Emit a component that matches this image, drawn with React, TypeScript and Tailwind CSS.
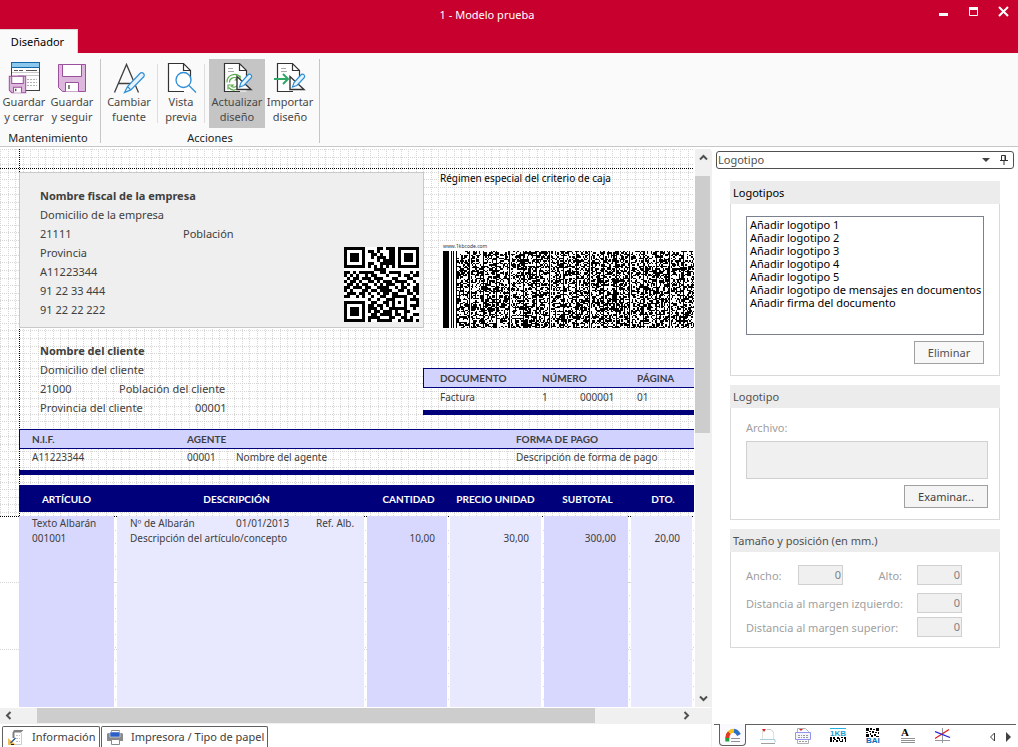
import type { ReactNode } from "react";

/* ---------- ribbon icons ---------- */

function Floppy({ x, y, s }: { x: number; y: number; s: number }) {
  const u = s / 28;
  return (
    <g transform={`translate(${x} ${y}) scale(${u})`} stroke="#9c4f9c" strokeWidth={1 / u} fill="none">
      <path d="M.5 .5H27.5V27.5H4.5L.5 23.5Z" fill="#dcb8dc" />
      <path d="M4.5 .5H23.5V12.5H4.5Z" fill="#fff" />
      <path d="M7.500 27.500V18.500H20.500V27.500" fill="#fff" />
      <path d="M11 21V25" stroke="#555" strokeWidth={1.4 / u} />
    </g>
  );
}

function SaveCloseIcon() {
  return (
    <svg width="32" height="32" viewBox="0 0 32 32" aria-hidden="true">
      <rect x="3.500" y="5.500" width="28" height="23" fill="#fff" stroke="#404040" />
      <rect x="3.500" y=".5" width="28" height="5" fill="#8cc8ee" stroke="#1766a6" />
      <path d="M6 8.500h4M11 8.500h4M18 8.500h11" stroke="#555" />
      <path d="M4 10.500h27M10 13.500h21" stroke="#c8c8c8" />
      <path d="M19 17.500h10M19 20.500h10M19 23.500h10" stroke="#b0b0b0" strokeDasharray="2 1" />
      <Floppy x={1} y={14} s={17} />
    </svg>
  );
}

function SaveIcon() {
  return (
    <svg width="32" height="32" viewBox="0 0 32 32" aria-hidden="true">
      <Floppy x={2} y={2} s={28} />
    </svg>
  );
}

function Pen() {
  return (
    <path
      d="M30 12.800c-1-1-2.300-.8-3.200.2l-6.800 7.600-1.500 4.400 4.400-1.500 7-7.500c1-1 1-2.300.1-3.200z"
      fill="#e6f3fc"
      stroke="#2f8fd6"
      strokeWidth="1.200"
    />
  );
}

function FontIcon() {
  return (
    <svg width="32" height="32" viewBox="0 0 32 32" aria-hidden="true">
      <path d="M1.500 30.500 13.500 2.500 25.500 30.500M5.500 21.500h16" fill="none" stroke="#404040" strokeWidth="1.300" />
      <path
        d="M30.500 11.500c-1-1.100-2.600-1-3.600 0L14.500 24.500l-3 6 6.300-2.600L30.500 15c1-1 1-2.500 0-3.500zM14.500 24.500l3.300 3.400"
        fill="#e6f3fc"
        stroke="#2f8fd6"
        strokeWidth="1.200"
      />
    </svg>
  );
}

function PageShape() {
  return (
    <>
      <path d="M3.500 1.500H18.500L25.500 8.500V29.500H3.500Z" fill="#fff" />
      <path d="M25.500 19V8.500L18.500 1.500H3.500V29.500H19M18.500 1.500V8.500H25.500" fill="none" stroke="#333" strokeWidth="1.200" />
    </>
  );
}

function PreviewIcon() {
  return (
    <svg width="32" height="32" viewBox="0 0 32 32" aria-hidden="true">
      <PageShape />
      <circle cx="18.500" cy="18" r="7.500" fill="#fff" stroke="#2f8fd6" strokeWidth="1.300" />
      <path d="M24 23.500 31 30.500" stroke="#2f8fd6" strokeWidth="1.300" />
    </svg>
  );
}

function SetSquare() {
  return <path d="M16 14.500V27.500H30Z" fill="#fff" stroke="#333" strokeWidth="1.400" />;
}

function RefreshDesignIcon() {
  return (
    <svg width="32" height="32" viewBox="0 0 32 32" aria-hidden="true">
      <PageShape />
      <path d="M7 6.500h5M7 9.500h6" stroke="#aaa" />
      <g fill="none" stroke="#58ad48" strokeWidth="1.200">
        <path d="M6 20.500a7.500 7.500 0 0 1 13.500-5M20.500 20a7.500 7.500 0 0 1-13 5.500" />
        <path d="M8.500 20.500a4.700 4.700 0 0 1 7.500-4l-1.500 1.500h4.500v-4.500M17.500 20.500a4.700 4.700 0 0 1-7 4l1.500-1.500H7v4.500" />
      </g>
      <SetSquare />
      <Pen />
    </svg>
  );
}

function ImportDesignIcon() {
  return (
    <svg width="32" height="32" viewBox="0 0 32 32" aria-hidden="true">
      <PageShape />
      <path d="M7 6.500h5M7 9.500h6" stroke="#aaa" />
      <SetSquare />
      <path d="M0 17H13M9 12 14 17 9 22" fill="none" stroke="#2fa866" strokeWidth="2" />
      <Pen />
    </svg>
  );
}

/* ---------- drawings on the canvas ---------- */

const STEP = 7.56;
const COLUMN_GAPS = [115, 365, 448, 543, 629, 693];

function DotGrid() {
  const lines = Array.from({ length: 260 }, (_, i) => Math.round(i * STEP));
  const rows = Array.from({ length: 49 }, (_, i) => Math.round(i * STEP));
  return (
    <svg className="absolute inset-0 h-full w-full" aria-hidden="true" shapeRendering="crispEdges">
      <g stroke="#d6d6d6" strokeDasharray="1 1">
        {lines.map((p) => (
          <line key={`v${p}`} x1={p + 0.5} x2={p + 0.5} y1="0" y2="368" />
        ))}
        {rows.map((p) => (
          <line key={`h${p}`} y1={p + 0.5} y2={p + 0.5} x1="0" x2="100%" />
        ))}
        <line x1="0" x2="100%" y1="433.500" y2="433.500" />
        <line x1="0" x2="100%" y1="500.500" y2="500.500" />
      </g>
      <g stroke="#d6d6d6" strokeDasharray="1 12">
        {COLUMN_GAPS.map((p) => (
          <line key={p} x1={p + 0.5} x2={p + 0.5} y1="381" y2="100%" />
        ))}
      </g>
      <g stroke="#000" strokeDasharray="1 1">
        <line x1="0" x2="100%" y1="19.500" y2="19.500" />
        <line x1="19.500" x2="19.500" y1="0" y2="368" />
        <line x1="0" x2="100%" y1="367.500" y2="367.500" />
      </g>
    </svg>
  );
}

const QR = [
  "1111111000011011101111111",
  "1000001011010001101000001",
  "1011101001101001101011101",
  "1011101001011101101011101",
  "1011101000010111101011101",
  "1000001011001111101000001",
  "1111111010101010101111111",
  "0000000000111100000000000",
  "1101011111001101111000101",
  "1010100101100010001011011",
  "0101101110111000110001100",
  "1011010011010111011110010",
  "0110101100101011100101001",
  "1101110110011110010110011",
  "1010001101101111001101011",
  "0111011010010110110001101",
  "1100101001001100111110010",
  "0000000010010011100010111",
  "1111111001100110101010001",
  "1000001011011010100010111",
  "1011101011101001111110010",
  "1011101010110111010011000",
  "1011101001101111011010011",
  "1000001011110001100110100",
  "1111111010011111001011101",
];

function QrCode() {
  const d = QR.map((row, y) =>
    row
      .split("")
      .map((c, x) => (c === "1" ? `M${x} ${y}h1v1h-1z` : ""))
      .join("")
  ).join("");
  return (
    <svg width="75" height="75" viewBox="0 0 25 25" shapeRendering="crispEdges" role="img" aria-label="QR">
      <rect width="25" height="25" fill="#fff" />
      <path d={d} />
    </svg>
  );
}

/* Cells are snapped to whole pixels so that columns are one or two pixels wide. */
function DenseBarcode() {
  const u = 4 / 3;
  let seed = 77;
  const next = () => {
    seed = (seed * 1103515245 + 12345) % 2147483648;
    return seed / 2147483648;
  };
  let d = "M0 0h6v77h-6zM8 0h1v77h-1zM10 0h1v77h-1z";
  for (let c = 0; c < 290; c++) {
    const x = Math.round(13 + c * u);
    const w = Math.round(13 + (c + 1) * u) - x;
    if (c % 10 === 0) {
      d += `M${x} 0h1v77h-1z`;
      continue;
    }
    for (let r = 0; r < 58; r++) {
      const y = Math.round(r * u);
      const h = Math.min(77, Math.round((r + 1) * u)) - y;
      if (next() < 0.5) d += `M${x} ${y}h${w}v${h}h-${w}z`;
    }
  }
  return (
    <svg width="400" height="77" className="block shrink-0 bg-white" shapeRendering="crispEdges" role="img" aria-label="1KB">
      <path d={d} />
    </svg>
  );
}

/* ---------- small pieces ---------- */

function Chevron({ d }: { d: string }) {
  return (
    <svg width="9" height="9" viewBox="0 0 9 9" aria-hidden="true">
      <path d={d} fill="none" stroke="#505050" strokeWidth="2" />
    </svg>
  );
}

function RibbonButton({ icon, top, bottom, active = false, width }: { icon: ReactNode; top: string; bottom: string; active?: boolean; width: string }) {
  return (
    <button
      type="button"
      className={`flex h-[69px] flex-col items-center whitespace-nowrap pt-[3px] text-[11px] leading-[15px] text-[#484848] ${width} ${active ? "bg-[#c5c5c5]" : ""}`}
    >
      {icon}
      <span>{top}</span>
      <span>{bottom}</span>
    </button>
  );
}

function Ribbon() {
  return (
    <div className="flex h-[94px] shrink-0 border-b border-[#c6c6c6] bg-[#fafafa] pb-[3px] pt-[6px]">
      <section className="flex w-[101px] flex-col border-r border-[#c6c6c6]">
        <div className="flex">
          <RibbonButton width="w-12" icon={<SaveCloseIcon />} top="Guardar" bottom="y cerrar" />
          <RibbonButton width="w-12" icon={<SaveIcon />} top="Guardar" bottom="y seguir" />
        </div>
        <h2 className="w-24 text-center text-[11px] leading-[19px] text-[#222]">Mantenimiento</h2>
      </section>
      <section className="flex w-[219px] flex-col border-r border-[#c6c6c6]">
        <div className="flex">
          <RibbonButton width="w-14" icon={<FontIcon />} top="Cambiar" bottom="fuente" />
          <div className="my-[5px] w-px bg-[#dedede]" />
          <RibbonButton width="w-[46px]" icon={<PreviewIcon />} top="Vista" bottom="previa" />
          <div className="my-[5px] mr-1 w-px bg-[#dedede]" />
          <RibbonButton width="w-14" icon={<RefreshDesignIcon />} top="Actualizar" bottom="diseño" active />
          <RibbonButton width="w-[50px]" icon={<ImportDesignIcon />} top="Importar" bottom="diseño" />
        </div>
        <h2 className="text-center text-[11px] leading-[19px] text-[#222]">Acciones</h2>
      </section>
    </div>
  );
}

function TitleBar() {
  return (
    <header className="flex h-[53px] shrink-0 flex-col bg-[#c8002d] text-white">
      <div className="grid h-[29px] grid-cols-[1fr_auto_1fr] items-center">
        <span />
        <h1 className="pr-11 pt-[2px] text-[11px]">1 - Modelo prueba</h1>
        <div className="flex h-full justify-end gap-[18px] pr-2 pt-[6px]">
          <button type="button" aria-label="Minimizar" className="h-3 w-3">
            <svg width="12" height="12" viewBox="0 0 12 12"><path d="M1 8.500h9" stroke="#fff" strokeWidth="3" /></svg>
          </button>
          <button type="button" aria-label="Maximizar" className="h-3 w-3">
            <svg width="12" height="12" viewBox="0 0 12 12"><path d="M1.500 1v8.500h8V1" stroke="#fff" fill="none" /><path d="M1 2.500h9" stroke="#fff" strokeWidth="3" /></svg>
          </button>
          <button type="button" aria-label="Cerrar" className="h-3 w-3">
            <svg width="12" height="12" viewBox="0 0 12 12"><path d="M1 1l9 9M10 1L1 10" stroke="#fff" strokeWidth="2" /></svg>
          </button>
        </div>
      </div>
      <nav className="flex h-6">
        <button type="button" className="w-[78px] border-r border-t border-[#d8d8d8] bg-[#fafafa] pr-[2px] pt-px text-[11px] text-black">Diseñador</button>
      </nav>
    </header>
  );
}

/* ---------- document canvas ---------- */

function CompanyBox() {
  return (
    <div className="flex h-[156px] w-[405px] shrink-0 items-end justify-between border border-[#c9c9c9] bg-[#efefef] pb-[5px] pl-5 pr-1 text-[11px] leading-[19px] text-[#404040]">
      <div className="self-start pt-[13px]">
        <p className="font-bold">Nombre fiscal de la empresa</p>
        <p>Domicilio de la empresa</p>
        <p className="flex"><span className="w-[143px]">21111</span><span>Población</span></p>
        <p>Provincia</p>
        <p>A11223344</p>
        <p>91 22 33 444</p>
        <p>91 22 22 222</p>
      </div>
      <QrCode />
    </div>
  );
}

function ClientBlock() {
  return (
    <div className="w-[383px] shrink-0 pt-[13px] text-[11px] leading-[19px] text-[#404040]">
      <p className="font-bold">Nombre del cliente</p>
      <p>Domicilio del cliente</p>
      <p className="flex"><span className="w-[79px]">21000</span><span>Población del cliente</span></p>
      <p className="flex"><span className="w-[155px]">Provincia del cliente</span><span>00001</span></p>
    </div>
  );
}

const bandHead = "h-5 bg-[#d2d2ff] font-['Lato',sans-serif]";

function DocumentTable() {
  return (
    <div className="mt-10 w-[400px] shrink-0 self-start border-b-[5px] border-[#00007b]">
      <table className="w-full table-fixed border-separate border-spacing-0 text-left text-[10px] text-[#404040]">
        <colgroup>
          <col className="w-[119px]" />
          <col className="w-[95px]" />
          <col />
        </colgroup>
        <thead>
          <tr className={bandHead}>
            <th className="border-y border-l border-[#00007b] p-0 pl-4">DOCUMENTO</th>
            <th className="border-y border-[#00007b] p-0">NÚMERO</th>
            <th className="border-y border-[#00007b] p-0">PÁGINA</th>
          </tr>
        </thead>
        <tbody>
          <tr className="h-[22px]">
            <td className="p-0 pb-1 pl-[17px]">Factura</td>
            <td className="p-0 pb-1"><span className="inline-block w-[38px]">1</span>000001</td>
            <td className="p-0 pb-1">01</td>
          </tr>
        </tbody>
      </table>
    </div>
  );
}

function AgentTable() {
  return (
    <div className="ml-[19px] border-b-[5px] border-[#00007b]">
      <table className="w-full table-fixed border-separate border-spacing-0 text-left text-[10px] text-[#404040]">
        <colgroup>
          <col className="w-[168px]" />
          <col className="w-[329px]" />
          <col />
        </colgroup>
        <thead>
          <tr className={bandHead}>
            <th className="border-y border-l border-[#00007b] p-0 pl-3">N.I.F.</th>
            <th className="border-y border-[#00007b] p-0">AGENTE</th>
            <th className="border-y border-[#00007b] p-0">FORMA DE PAGO</th>
          </tr>
        </thead>
        <tbody>
          <tr className="h-[21px]">
            <td className="p-0 pb-1 pl-[13px]">A11223344</td>
            <td className="p-0 pb-1"><span className="inline-block w-[49px]">00001</span>Nombre del agente</td>
            <td className="p-0 pb-1">Descripción de forma de pago</td>
          </tr>
        </tbody>
      </table>
    </div>
  );
}

const dark = "border-r-[3px] border-transparent bg-[#d8d8ff] bg-clip-padding p-0";
const light = "border-r-[3px] border-transparent bg-[#e8e8ff] bg-clip-padding p-0";

function LinesTable() {
  return (
    <table className="ml-[19px] mt-[10px] w-[760px] table-fixed border-separate border-spacing-0 text-[10px] leading-[15px] text-[#404040]">
      <colgroup>
        <col className="w-[98px]" />
        <col className="w-[250px]" />
        <col className="w-[83px]" />
        <col className="w-[94px]" />
        <col className="w-[87px]" />
        <col className="w-16" />
        <col />
      </colgroup>
      <thead>
        <tr className="h-[27px] bg-[#00007b] font-['Lato',sans-serif] text-white">
          <th className="p-0 pr-[3px] pt-px">ARTÍCULO</th>
          <th className="p-0 pr-[11px] pt-px">DESCRIPCIÓN</th>
          <th className="p-0 pt-px">CANTIDAD</th>
          <th className="p-0 pr-[3px] pt-px">PRECIO UNIDAD</th>
          <th className="p-0 pt-px">SUBTOTAL</th>
          <th className="p-0 pt-px">DTO.</th>
          <td className="p-0" />
        </tr>
        <tr className="h-1"><td colSpan={7} className="p-0" /></tr>
      </thead>
      <tbody className="align-top">
        <tr className="h-[15px]">
          <td className={`${dark} pl-[13px]`}>Texto Albarán</td>
          <td className={`${light} pl-[13px]`}>
            <div className="grid grid-cols-[106px_80px_auto]"><span>Nº de Albarán</span><span>01/01/2013</span><span>Ref. Alb.</span></div>
          </td>
          <td className={dark} /><td className={light} /><td className={dark} /><td className={light} /><td className={dark} />
        </tr>
        <tr className="h-[400px]">
          <td className={`${dark} pl-[13px]`}>001001</td>
          <td className={`${light} pl-[13px]`}>Descripción del artículo/concepto</td>
          <td className={`${dark} pr-3 text-right`}>10,00</td>
          <td className={`${light} pr-3 text-right`}>30,00</td>
          <td className={`${dark} pr-3 text-right`}>300,00</td>
          <td className={`${light} pr-3 text-right`}>20,00</td>
          <td className={dark} />
        </tr>
      </tbody>
    </table>
  );
}

function Canvas() {
  return (
    <div className="relative min-h-0 flex-1 overflow-hidden bg-white">
      <DotGrid />
      <div className="relative pt-[23px]">
        <div className="flex pl-[19px]">
          <CompanyBox />
          <div className="flex shrink-0 flex-col justify-between pl-4">
            <p className="text-[10px] leading-[13px] text-black">Régimen especial del criterio de caja</p>
            <div className="bg-white pl-[3px]">
              <p className="text-[5px] leading-[10px] text-[#333]">www.1kbcode.com</p>
              <DenseBarcode />
            </div>
          </div>
        </div>
        <div className="flex h-[101px] pl-10">
          <ClientBlock />
          <DocumentTable />
        </div>
        <AgentTable />
        <LinesTable />
      </div>
    </div>
  );
}

function CanvasArea() {
  return (
    <div className="flex min-h-0 flex-1 flex-col pt-[2px]">
      <div className="flex min-h-0 flex-1">
        <div className="flex min-w-0 flex-1 flex-col"><Canvas /></div>
        <div className="ml-px flex w-4 flex-col items-center bg-[#f0f0f0]">
          <button type="button" aria-label="Subir" className="flex h-[17px] w-full items-center justify-center"><Chevron d="M1 6.500 4.500 3 8 6.500" /></button>
          <div className="min-h-0 w-full flex-1 pr-px pt-[10px]"><div className="h-1/2 bg-[#cdcdcd]" /></div>
          <button type="button" aria-label="Bajar" className="flex h-[17px] w-full items-center justify-center"><Chevron d="M1 2.500 4.500 6 8 2.500" /></button>
        </div>
      </div>
      <div className="mt-px flex h-4 bg-[#f0f0f0] pr-4">
        <button type="button" aria-label="Izquierda" className="flex h-[15px] w-[17px] items-center justify-center"><Chevron d="M6.500 1 3 4.500 6.500 8" /></button>
        <div className="flex-1 pb-px pl-5"><div className="h-full w-[87%] bg-[#cdcdcd]" /></div>
        <button type="button" aria-label="Derecha" className="flex h-[15px] w-[17px] items-center justify-center"><Chevron d="M2.500 1 6 4.500 2.500 8" /></button>
      </div>
    </div>
  );
}

function SheetTabs() {
  const tab = "flex h-[21px] items-center whitespace-nowrap rounded-t-[2px] border border-b-0 border-[#606060] bg-white text-[11px] text-[#404040]";
  return (
    <nav className="mt-[2px] flex h-[21px] shrink-0 gap-px pl-[2px]">
      <button type="button" className={`${tab} w-[98px] gap-2 pl-[5px]`}>
        <svg width="16" height="17" viewBox="0 0 16 17" aria-hidden="true">
          <path d="M6 1h9.500L13 3.500H4.500zM4.500 3.500V9h2V3.500z" fill="#808080" />
          <path d="M13.500 4v11.500H7" fill="none" stroke="#ccc" />
          <path d="M8 6.500h4M8 9.500h4M8 12.500h4" stroke="#c4c4c4" strokeDasharray="2 1" />
          <path d="M0 9v7h8z" fill="#f3bd5a" />
          <path d="M7.500 9 2.500 14" stroke="#2c5f95" strokeWidth="1.500" />
          <path d="M3 15.500h3" stroke="#222" />
        </svg>
        Información
      </button>
      <button type="button" className={`${tab} w-[167px] gap-2 pl-[5px]`}>
        <svg width="16" height="17" viewBox="0 0 16 17" aria-hidden="true">
          <path d="M4.500 4V1.500H12.500V4M4.500 12v3.500H12.500V12" fill="#fff" stroke="#8a8a8a" />
          <path d="M1 4h14l1 1v7H0V5z" fill="#8a8a8a" />
          <path d="M3 3h10v5H3z" fill="#2a5fc8" stroke="#fff" strokeWidth=".5" />
          <path d="M5 11h7v4H5z" fill="#fff" />
        </svg>
        Impresora / Tipo de papel
      </button>
    </nav>
  );
}

/* ---------- side panel ---------- */

function Group({ title, black = false, height, children }: { title: string; black?: boolean; height: string; children: ReactNode }) {
  return (
    <section className={`flex flex-col border border-t-0 border-[#d9d9d9] text-[11px] ${height}`}>
      <h2 className={`-mx-px h-[23px] bg-[#ececec] pl-[3px] leading-[23px] ${black ? "text-black" : "text-[#505050]"}`}>{title}</h2>
      {children}
    </section>
  );
}

const field = "border border-[#d0d0d0] bg-[#f0f0f0] text-[#808080]";
const numberField = `${field} h-5 w-[45px] px-[1px] pb-[2px] text-right text-[11px]`;

const LOGOS = [
  "Añadir logotipo 1",
  "Añadir logotipo 2",
  "Añadir logotipo 3",
  "Añadir logotipo 4",
  "Añadir logotipo 5",
  "Añadir logotipo de mensajes en documentos",
  "Añadir firma del documento",
];

function ToolTabs() {
  const tab = "flex h-[22px] w-[27px] items-center justify-center";
  return (
    <nav className="ml-[2px] mr-[2px] flex h-[23px] shrink-0 items-start gap-2 border-t border-[#606060] pl-[5px]">
      <button type="button" aria-label="Logotipo" className={`${tab} -mt-px rounded-b-[4px] border border-t-0 border-[#606060] bg-[#fafafe]`}>
        <svg width="16" height="16" viewBox="0 0 16 16" aria-hidden="true">
          <g fill="none" strokeWidth="4">
            <path d="M2.300 14.500V10.500" stroke="#1d9f3c" />
            <path d="M2.300 11Q2.400 7.500 4.500 5.600" stroke="#e03a20" />
            <path d="M4.300 5.700Q6.300 3.700 9 3.800" stroke="#f2c01c" />
            <path d="M9 3.800Q12 4.200 14 8" stroke="#2a6fc4" />
          </g>
          <path d="M6 11.500h9M6 14.500h9" stroke="#909090" />
        </svg>
      </button>
      <button type="button" aria-label="Pie" className={tab}>
        <svg width="16" height="16" viewBox="0 0 16 16" aria-hidden="true">
          <path d="M2.500 2v9M13.500 4v7" stroke="#e2e2e2" />
          <path d="M7 1.500h4l2.500 3" fill="none" stroke="#c8c8c8" />
          <path d="M2 1h4L4 4z" fill="#e02020" />
          <path d="M0 11.500h15v3" fill="none" stroke="#a6cde0" />
          <path d="M1 15.500h14" stroke="#a0a0a0" />
        </svg>
      </button>
      <button type="button" aria-label="Cuerpo" className={tab}>
        <svg width="16" height="16" viewBox="0 0 16 16" aria-hidden="true">
          <path d="M2.500 15.500V.5h8l3 3v12z" fill="#fff" stroke="#b0b0b0" />
          <path d="M4 1h4L6 3z" fill="#e02020" />
          <path d="M.5 4.500h15v7H.5z" fill="#f4f4fb" stroke="#9494ee" />
          <path d="M3 7.500h4M8 7.500h5M3 9.500h4M8 9.500h5M4 13.500h8" stroke="#999" strokeDasharray="2 1" />
        </svg>
      </button>
      <button type="button" aria-label="Código 1KB" className={tab}>
        <svg width="18" height="16" viewBox="0 0 18 16" aria-hidden="true">
          <path d="M1 .5h16" stroke="#25b4e0" />
          <text x="1" y="8" fontSize="8" fontWeight="700" fontFamily="Liberation Sans, sans-serif" fill="#18a0d0">1KB</text>
          <path d="M1 9h2v5H1zM4 9h2v2H4zM5 11h2v1H5zM4 12h1v2H4zM7 12h2v2H7zM8 9h2v2H8zM10 10h1v3h-1zM12 9h2v1h-2zM11 13h3v1h-3zM13 11h1v2h-1zM15 9h2v5h-1v-3h-1z" />
        </svg>
      </button>
      <button type="button" aria-label="Código BAI" className={tab}>
        <svg width="18" height="18" viewBox="0 0 18 18" aria-hidden="true">
          <path d="M2 1h3v3H2zM6 1h2v2H6zM9 2h2v1H9zM12 1h3v3h-3zM5 4h2v1H5zM8 4h2v2H8zM2 5h2v1H2zM11 5h2v1h-2zM14 5h1v2h-1zM2 7h3v3H2zM6 6h1v2H6zM7 8h2v2H7zM10 7h2v2h-2zM12 9h3v1h-3z" />
          <text x="2" y="16" fontSize="8" fontWeight="700" fontFamily="Liberation Sans, sans-serif" fill="#0a6ab8">BAI</text>
        </svg>
      </button>
      <button type="button" aria-label="Texto" className={tab}>
        <svg width="16" height="20" viewBox="0 0 16 20" aria-hidden="true">
          <text x="1" y="10" fontSize="11" fontWeight="700" fontFamily="Liberation Serif, serif">A</text>
          <path d="M1 12.500h14M1 14.500h14M1 16.500h14" stroke="#909090" />
        </svg>
      </button>
      <button type="button" aria-label="Líneas" className={tab}>
        <svg width="16" height="16" viewBox="0 0 16 16" aria-hidden="true">
          <path d="M7.500 0v15M0 12.500h15" stroke="#999" />
          <path d="M0 10.500 14 1.500" stroke="#e02020" strokeWidth="1.300" />
          <path d="M0 3.500 15 9.500" stroke="#2020e0" strokeWidth="1.300" />
        </svg>
      </button>
      <div className="ml-auto flex h-[22px] items-center gap-2 pr-1 pt-[2px]">
        <button type="button" aria-label="Anterior"><svg width="8" height="10" viewBox="0 0 8 10"><path d="M5.500 1v8L1.500 5z" fill="#fff" stroke="#404040" /></svg></button>
        <button type="button" aria-label="Siguiente"><svg width="7" height="10" viewBox="0 0 7 10"><path d="M1 0v10l5-5z" fill="#404040" /></svg></button>
      </div>
    </nav>
  );
}

function SidePanel() {
  return (
    <aside className="mt-1 flex w-[307px] shrink-0 flex-col border-l border-[#f0f0f0]">
      <div className="ml-1 mr-1 flex h-[18px] items-center rounded-[3px] border border-[#505050] bg-white">
        <div className="relative flex-1">
          <select aria-label="Panel" className="block h-4 w-full appearance-none pl-[1px] text-[11px] leading-4 text-[#505050]">
            <option>Logotipo</option>
          </select>
          <svg className="pointer-events-none absolute right-0 top-[6px]" width="8" height="5" viewBox="0 0 8 5" aria-hidden="true"><path d="M0 0h8L4 4z" fill="#404040" /></svg>
        </div>
        <button type="button" aria-label="Fijar" className="ml-[10px] mr-[5px]">
          <svg width="8" height="10" viewBox="0 0 8 10" className="block"><path d="M1.500 5.500V.5h4v5M0 5.500h8M4 6v4M5 1v4" fill="none" stroke="#303030" /></svg>
        </button>
      </div>
      <div className="flex flex-1 flex-col pl-[18px] pr-[18px] pt-3">
        <Group title="Logotipos" black height="h-[195px]">
          <div className="flex flex-1 flex-col items-end pl-[15px] pr-[15px] pt-3">
            <select size={9} aria-label="Logotipos" className="h-[119px] w-full overflow-hidden border border-[#7a808c] bg-white px-px py-0 text-[11px] leading-[13px] text-black">
              {LOGOS.map((l) => (
                <option key={l} className="h-[13px] min-h-0 p-0 px-[2px] leading-[13px]">{l}</option>
              ))}
            </select>
            <button type="button" className="mt-[6px] h-[23px] w-[70px] border border-[#a0a0a0] bg-[#f8f8f8] pt-px text-[#505050]">Eliminar</button>
          </div>
        </Group>
        <div className="h-[9px]" />
        <Group title="Logotipo" height="h-[135px]">
          <div className="flex flex-col items-end pl-[15px] pr-[11px] pt-[11px]">
            <label htmlFor="archivo" className="self-start leading-[18px] text-[#a0a0a0]">Archivo:</label>
            <textarea id="archivo" disabled className={`${field} mt-[4px] block h-[38px] w-full resize-none`} />
            <button type="button" className="mt-[6px] h-[23px] w-[84px] border border-[#a0a0a0] bg-[#f4f4f4] pt-px text-[#404040]">Examinar...</button>
          </div>
        </Group>
        <div className="h-[9px]" />
        <Group title="Tamaño y posición (en mm.)" height="h-[119px]">
          <div className="flex flex-col pl-[15px] pr-[37px] pt-[13px] text-[#a0a0a0]">
            <div className="flex h-5 items-center">
              <label htmlFor="ancho" className="w-[52px] pt-[2px]">Ancho:</label>
              <input id="ancho" disabled defaultValue="0" className={numberField} />
              <label htmlFor="alto" className="ml-auto mr-[15px] pt-[2px]">Alto:</label>
              <input id="alto" disabled defaultValue="0" className={numberField} />
            </div>
            <div className="mt-2 flex h-5 items-center justify-between">
              <label htmlFor="izq" className="whitespace-nowrap pt-[2px]">Distancia al margen izquierdo:</label>
              <input id="izq" disabled defaultValue="0" className={numberField} />
            </div>
            <div className="mt-1 flex h-5 items-center justify-between">
              <label htmlFor="sup" className="whitespace-nowrap pt-[2px]">Distancia al margen superior:</label>
              <input id="sup" disabled defaultValue="0" className={numberField} />
            </div>
          </div>
        </Group>
      </div>
      <ToolTabs />
    </aside>
  );
}

export default function App() {
  return (
    <div className="flex h-screen flex-col overflow-hidden bg-white font-['Noto_Sans',sans-serif]">
      <TitleBar />
      <Ribbon />
      <main className="flex min-h-0 flex-1">
        <div className="flex min-w-0 flex-1 flex-col">
          <CanvasArea />
          <SheetTabs />
        </div>
        <SidePanel />
      </main>
    </div>
  );
}
